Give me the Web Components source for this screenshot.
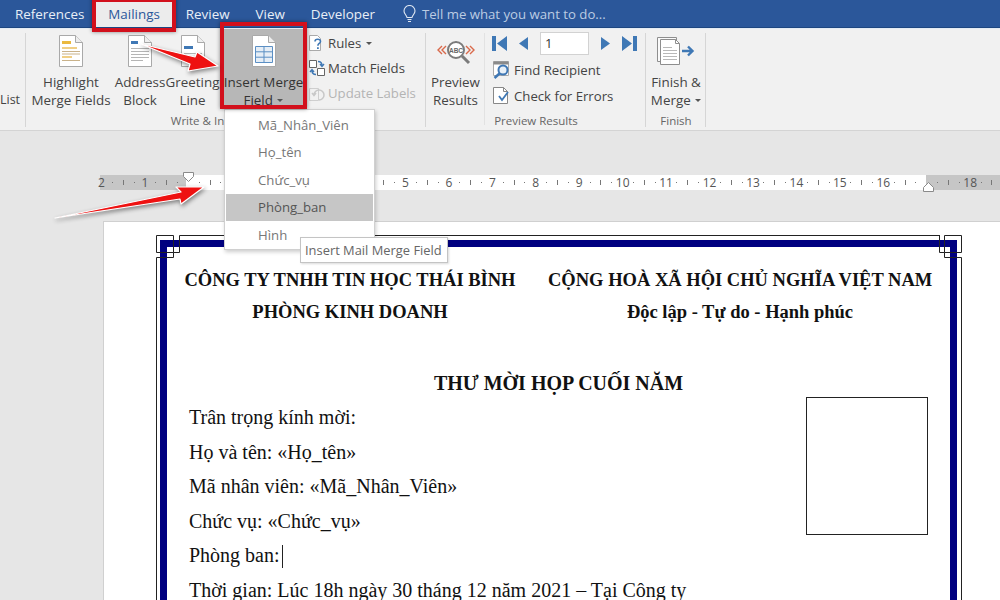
<!DOCTYPE html>
<html>
<head>
<meta charset="utf-8">
<title>Mailings</title>
<style>
  html, body { margin: 0; padding: 0; height: 100%; overflow: hidden; }
  body { font-family: "Open Sans", "Liberation Sans", sans-serif; background: #e6e6e6; }
  word-app { width: 1000px; height: 600px; }
</style>
</head>
<body>
<word-app>
  <tab-strip>
    <tab-item style="padding-right:11px">References</tab-item>
    <tab-item active>Mailings</tab-item>
    <tab-item>Review</tab-item>
    <tab-item>View</tab-item>
    <tab-item>Developer</tab-item>
    <tell-me>Tell me what you want to do...</tell-me>
  </tab-strip>

  <ribbon-bar>
    <ribbon-group width="26" label="">
      <big-btn width="20" style="font-size:12.5px"><span slot="icon"></span><br>List</big-btn>
    </ribbon-group>

    <!-- the menu hides the rest of this group's caption, the visible part is all that is drawn -->
    <ribbon-group width="400" label="Write &amp; In" label-inset="57">
      <big-btn width="90">
        <svg slot="icon" width="24" height="32" viewBox="0 0 24 32">
          <path d="M.5.5h16l7 7v24H.5z" fill="#fff" stroke="#a9a9a9"/><path d="M16.5.5v7h7" fill="#eee" stroke="#a9a9a9"/>
          <path d="M3 6h9v3H3z" fill="#eab93f"/><path d="M3 12h15v2H3zM3 21h10v2H3z" fill="#f0cf86"/><path d="M3 16.5h18M3 19h18M3 25.5h18" stroke="#c9b28a"/>
        </svg>
        Highlight<br>Merge Fields
      </big-btn>
      <big-btn width="48">
        <svg slot="icon" width="24" height="32" viewBox="0 0 24 32">
          <path d="M.5.5h16l7 7v24H.5z" fill="#fff" stroke="#a9a9a9"/><path d="M16.5.5v7h7" fill="#eee" stroke="#a9a9a9"/>
          <path d="M3 6h7v3H3z" fill="#3f78b5"/><path d="M3 13.5h18M3 16.5h18M3 19.5h18M3 22.5h18M3 25.5h12" stroke="#b5b5b5"/>
        </svg>
        Address<br>Block
      </big-btn>
      <big-btn width="57">
        <svg slot="icon" width="24" height="32" viewBox="0 0 24 32">
          <path d="M.5.5h16l7 7v24H.5z" fill="#fff" stroke="#a9a9a9"/><path d="M16.5.5v7h7" fill="#eee" stroke="#a9a9a9"/>
          <path d="M3 11h9v3H3z" fill="#3f78b5"/><path d="M3 18.5h18M3 21.5h18M3 24.5h18" stroke="#b5b5b5"/>
        </svg>
        Greeting<br>Line
      </big-btn>
      <big-btn width="85" active>
        <svg slot="icon" width="24" height="32" viewBox="0 0 24 32">
          <path d="M.5.5h16l7 7v24H.5z" fill="#fff" stroke="#a9a9a9"/><path d="M16.5.5v7h7" fill="#eee" stroke="#a9a9a9"/>
          <path d="M3.5 11.5h17v16h-17zM3.5 16.8h17M3.5 22.2h17M12 11.5v16" fill="#e6eef6" stroke="#5b8fc4"/>
        </svg>
        Insert Merge<br>Field <drop-caret></drop-caret>
      </big-btn>
      <btn-stack>
        <small-btn>
          <svg slot="icon" width="18" height="18" viewBox="0 0 18 18">
            <path d="M1.5 1.5h8l3 3v12h-11z" fill="#fff" stroke="#aaa"/><path d="M7 7.5c0-3 5.5-3 5.5 0 0 2-2.6 2-2.6 4.2" fill="none" stroke="#3f78b5" stroke-width="1.6"/><path d="M9 13.2h1.8V15H9z" fill="#3f78b5"/>
          </svg>
          Rules <drop-caret></drop-caret>
        </small-btn>
        <small-btn>
          <svg slot="icon" width="18" height="18" viewBox="0 0 18 18">
            <path d="M1.5 1.5h7v7h-7zM9.5 9.5h7v7h-7z" fill="#fff" stroke="#666"/><path d="M10 2.5c3 0 4 1.500 4 4M12 5l2 2.500L16 5" fill="none" stroke="#3f78b5" stroke-width="1.4"/><path d="M8 15.500c-3 0-4-1.500-4-4M2 13l2-2.500L6 13" fill="none" stroke="#3f78b5" stroke-width="1.4"/>
          </svg>
          Match Fields
        </small-btn>
        <small-btn disabled>
          <svg slot="icon" width="18" height="18" viewBox="0 0 18 18">
            <path d="M1.5 4.500h9v12h-9z" fill="none" stroke="#cfcfcf"/><path d="M6 11a5 5 0 1 1 5 5M4 9l2 2.500L8 9" fill="none" stroke="#c8c8c8" stroke-width="1.5"/>
          </svg>
          Update Labels
        </small-btn>
      </btn-stack>
    </ribbon-group>

    <ribbon-group width="220" label="Preview Results">
      <big-btn width="59" divided>
        <svg slot="icon" width="40" height="26" viewBox="0 0 40 26" style="margin-top:5px">
          <path d="M6 6l-4 4 4 4M10 6l-4 4 4 4M30 6l4 4-4 4M34 6l4 4-4 4" fill="none" stroke="#d9694a" stroke-width="1.4"/>
          <circle cx="20" cy="10" r="8" fill="#fff" stroke="#7b7b7b" stroke-width="2"/>
          <text x="20" y="12.500" font-size="6.500" font-weight="700" text-anchor="middle" fill="#666" font-family="Liberation Sans">ABC</text>
          <path d="M26 16l7 7" stroke="#7b7b7b" stroke-width="3"/>
        </svg>
        Preview<br>Results
      </big-btn>
      <nav-stack>
        <record-nav value="1"></record-nav>
        <small-btn tight>
          <svg slot="icon" width="19" height="19" viewBox="0 0 19 19">
            <path d="M1.500 1.500h15v14h-15z" fill="#fff" stroke="#aaa"/><path d="M1.500 1.500h15v3h-15z" fill="#8a8a8a"/>
            <circle cx="11" cy="10" r="4.500" fill="#e8f0f8" stroke="#3f78b5" stroke-width="2"/><path d="M7.500 13.500l-5 4.500" stroke="#3f78b5" stroke-width="2.500"/>
          </svg>
          Find Recipient
        </small-btn>
        <small-btn tight>
          <svg slot="icon" width="19" height="19" viewBox="0 0 19 19">
            <path d="M1.500 1.500h10l4 4v12h-14z" fill="#fff" stroke="#888"/><path d="M11.500 1.500v4h4" fill="none" stroke="#888"/>
            <path d="M7 10l3 4 6-8" fill="none" stroke="#3f78b5" stroke-width="1.800"/>
          </svg>
          Check for Errors
        </small-btn>
      </nav-stack>
    </ribbon-group>

    <ribbon-group width="60" label="Finish">
      <big-btn width="60">
        <svg slot="icon" width="38" height="28" viewBox="0 0 38 28" style="margin-top:2px">
          <path d="M.5.500h19v24H.5z" fill="#fafafa" stroke="#8e8e8e"/>
          <path d="M3.500 2.500h15l4 4v21h-19z" fill="#fff" stroke="#8e8e8e"/><path d="M18.500 2.500v4h4" fill="none" stroke="#8e8e8e"/>
          <path d="M6 10.500h9M6 13.500h14M6 16.500h14M6 19.500h14M6 22.500h14" stroke="#b8b8b8"/>
          <path d="M25 14h10M31 9.500l4.500 4.500-4.500 4.500" fill="none" stroke="#3f78b5" stroke-width="2.400"/>
        </svg>
        Finish &amp;<br>Merge <drop-caret></drop-caret>
      </big-btn>
    </ribbon-group>
  </ribbon-bar>

  <doc-canvas>
    <word-ruler></word-ruler>
    <doc-page>
      <doc-frame>
        <doc-heading>
          <span>CÔNG TY TNHH TIN HỌC THÁI BÌNH</span>
          <span>CỘNG HOÀ XÃ HỘI CHỦ NGHĨA VIỆT NAM</span>
          <span>PHÒNG KINH DOANH</span>
          <span>Độc lập - Tự do - Hạnh phúc</span>
        </doc-heading>
        <doc-title>THƯ MỜI HỌP CUỐI NĂM</doc-title>
        <doc-body>
          <div>Trân trọng kính mời:</div>
          <div>Họ và tên: «Họ_tên»</div>
          <div>Mã nhân viên: «Mã_Nhân_Viên»</div>
          <div>Chức vụ: «Chức_vụ»</div>
          <div>Phòng ban: <text-caret></text-caret></div>
          <div>Thời gian: Lúc 18h ngày 30 tháng 12 năm 2021 – Tại Công ty</div>
        </doc-body>
      </doc-frame>
    </doc-page>
  </doc-canvas>

  <merge-menu>
    <menu-row>Mã_Nhân_Viên</menu-row>
    <menu-row>Họ_tên</menu-row>
    <menu-row>Chức_vụ</menu-row>
    <menu-row hover>Phòng_ban</menu-row>
    <menu-row>Hình</menu-row>
  </merge-menu>
  <tool-tip>Insert Mail Merge Field</tool-tip>
  <red-marks></red-marks>
</word-app>

<script>
  class WordApp extends HTMLElement {
    constructor() {
      super();
      this.attachShadow({ mode: 'open' });
      this.shadowRoot.innerHTML = `
        <style>
          :host { display: flex; flex-direction: column; position: relative; overflow: hidden; color: #444; }
        </style>
        <slot></slot>`;
    }
  }

  class TabStrip extends HTMLElement {
    constructor() {
      super();
      this.attachShadow({ mode: 'open' });
      this.shadowRoot.innerHTML = `
        <style>
          :host { display: flex; height: 27px; padding-left: 2px; background: #2b579a; border-bottom: 1px solid #1d4680; flex: none; }
        </style>
        <slot></slot>`;
    }
  }

  class TabItem extends HTMLElement {
    constructor() {
      super();
      this.attachShadow({ mode: 'open' });
      this.shadowRoot.innerHTML = `
        <style>
          :host { display: flex; align-items: center; padding: 0 13px; font-size: 13.400px; color: #e9eff7; height: 27px; }
          :host([active]) { background: #ececec; color: #2b579a; }
        </style>
        <slot></slot>`;
    }
  }

  class TellMe extends HTMLElement {
    constructor() {
      super();
      this.attachShadow({ mode: 'open' });
      this.shadowRoot.innerHTML = `
        <style>
          :host { display: flex; align-items: center; gap: 6px; margin-left: 15px; font-size: 13.200px; color: #bccce3; height: 27px; }
        </style>
        <svg width="13" height="18" viewBox="0 0 13 18">
          <path d="M4 12.500C3.500 10 1 9 1 6a5.500 5.500 0 0 1 11 0c0 3-2.500 4-3 6.500z" fill="none" stroke="#dfe7f2" stroke-width="1.100"/>
          <path d="M4.500 14.500h4M5 16.500h3" stroke="#dfe7f2" stroke-width="1.100"/>
        </svg>
        <slot></slot>`;
    }
  }

  class RibbonBar extends HTMLElement {
    constructor() {
      super();
      this.attachShadow({ mode: 'open' });
      this.shadowRoot.innerHTML = `
        <style>
          :host { display: flex; flex: none; background: #f1f1f1; border-top: 1px solid #e4ebf3; border-bottom: 1px solid #d4d4d4; box-sizing: border-box; height: 103px; }
        </style>
        <slot></slot>`;
    }
  }

  class RibbonGroup extends HTMLElement {
    constructor() {
      super();
      this.attachShadow({ mode: 'open' });
      const inset = this.getAttribute('label-inset') || 0;
      this.shadowRoot.innerHTML = `
        <style>
          :host { display: flex; flex-direction: column; flex: none; box-sizing: border-box; width: ${this.getAttribute('width')}px; position: relative; }
          :host::after { content: ""; position: absolute; right: 0; top: 4px; bottom: 3px; width: 1px; background: #d6d6d6; }
          .items { display: flex; height: 83px; flex: none; }
          .label { text-align: center; font-size: 11.500px; line-height: 18px; color: #666; white-space: nowrap; padding-right: ${inset}px; }
        </style>
        <div class="items"><slot></slot></div>
        <div class="label">${this.getAttribute('label').replace('&', '&amp;')}</div>`;
    }
  }

  class BigBtn extends HTMLElement {
    constructor() {
      super();
      this.attachShadow({ mode: 'open' });
      this.shadowRoot.innerHTML = `
        <style>
          :host { display: flex; flex-direction: column; align-items: center; flex: none; box-sizing: border-box; width: ${this.getAttribute('width')}px; height: 80px; text-align: center; font-size: 13.400px; line-height: 18px; white-space: nowrap; color: #444; position: relative; }
          :host([active]) { background: #b7b7b7; color: #333; }
          :host([divided])::after { content: ""; position: absolute; right: 0; top: 4px; height: 92px; width: 1px; background: #e2e2e2; }
          .icon { height: 38px; padding-top: 6px; flex: none; }
        </style>
        <div class="icon"><slot name="icon"></slot></div>
        <div class="text"><slot></slot></div>`;
    }
  }

  class BtnStack extends HTMLElement {
    constructor() {
      super();
      this.attachShadow({ mode: 'open' });
      this.shadowRoot.innerHTML = `
        <style>
          :host { display: flex; flex-direction: column; padding: 1px 0 0 2px; }
        </style>
        <slot></slot>`;
    }
  }

  class NavStack extends HTMLElement {
    constructor() {
      super();
      this.attachShadow({ mode: 'open' });
      this.shadowRoot.innerHTML = `
        <style>
          :host { display: flex; flex-direction: column; padding: 2px 0 0 7px; gap: 1px; }
        </style>
        <slot></slot>`;
    }
  }

  class SmallBtn extends HTMLElement {
    constructor() {
      super();
      this.attachShadow({ mode: 'open' });
      this.shadowRoot.innerHTML = `
        <style>
          :host { display: flex; align-items: center; gap: 2px; height: 25px; font-size: 13.200px; white-space: nowrap; color: #444; }
          :host([tight]) { gap: 3px; }
          :host([disabled]) { color: #b4b4b4; }
          ::slotted(svg) { flex: none; }
        </style>
        <slot name="icon"></slot><span><slot></slot></span>`;
    }
  }

  class RecordNav extends HTMLElement {
    constructor() {
      super();
      this.attachShadow({ mode: 'open' });
      this.shadowRoot.innerHTML = `
        <style>
          :host { display: flex; align-items: center; height: 25px; color: #3f78b5; }
          .box { width: 49px; height: 23px; box-sizing: border-box; background: #fff; border: 1px solid #d2d2d2; font-size: 13px; color: #333; padding-left: 4px; line-height: 21px; margin: 0 11px 0 11px; }
          svg { display: block; }
        </style>
        <svg width="16" height="15" viewBox="0 0 16 15" style="margin-left:0"><path d="M0 0h4v15H0zM15 0v15L5 7.500z" fill="currentColor"/></svg>
        <svg width="11" height="15" viewBox="0 0 11 15" style="margin-left:10px"><path d="M10 1v13L1 7.500z" fill="currentColor"/></svg>
        <div class="box">${this.getAttribute('value')}</div>
        <svg width="11" height="15" viewBox="0 0 11 15"><path d="M1 1v13l9-6.500z" fill="currentColor"/></svg>
        <svg width="16" height="15" viewBox="0 0 16 15" style="margin-left:10px"><path d="M12 0h4v15h-4zM1 0v15l10-7.500z" fill="currentColor"/></svg>`;
    }
  }

  class DropCaret extends HTMLElement {
    constructor() {
      super();
      this.attachShadow({ mode: 'open' });
      this.shadowRoot.innerHTML = `
        <style>
          :host { display: inline-block; width: 0; height: 0; margin-left: 1px; vertical-align: 3px; border: 3px solid transparent; border-top-color: #555; border-bottom: 0; }
        </style>`;
    }
  }

  class DocCanvas extends HTMLElement {
    constructor() {
      super();
      this.attachShadow({ mode: 'open' });
      this.shadowRoot.innerHTML = `
        <style>
          :host { display: flex; flex-direction: column; flex: 1; min-height: 0; background: #e6e6e6; padding-top: 44px; overflow: hidden; }
        </style>
        <slot></slot>`;
    }
  }

  class WordRuler extends HTMLElement {
    constructor() {
      super();
      this.attachShadow({ mode: 'open' });
      const unit = 10.87;
      const hidden = [1, 2, 3, 4, 17];
      let cells = '';
      // cell 0 is the "2" to the left of the margin, one inch is four cells
      for (let i = 0; i < 84; i++) {
        const n = (i - 8) / 4;
        let mark = '';
        if (i % 4 === 0) {
          const num = Math.abs(n);
          mark = n === 0 || (n > 0 && hidden.includes(num)) ? '' : String(num);
        } else if (i % 4 === 2) {
          mark = '<b></b>';
        } else {
          mark = '<i></i>';
        }
        cells += `<span>${mark}</span>`;
      }
      this.shadowRoot.innerHTML = `
        <style>
          :host { display: flex; flex: none; height: 15px; margin-left: 96px; position: relative; font-size: 12px; color: #555;
            background: linear-gradient(to right, transparent 4px, #c6c6c6 4px, #c6c6c6 90px, #fff 90px, #fff 830px, #c6c6c6 830px); }
          span { flex: none; width: ${unit}px; height: 15px; display: flex; align-items: center; justify-content: center; white-space: nowrap; }
          b { width: 1px; height: 5px; background: #777; }
          i { width: 1px; height: 1px; background: #777; }
          svg { position: absolute; }
        </style>
        ${cells}
        <svg style="left:86px;top:-3px" width="13" height="11" viewBox="0 0 13 11"><path d="M1.500.5h10v4l-5 5-5-5z" fill="#fff" stroke="#8a8a8a"/></svg>
        <svg style="left:826px;top:7px" width="13" height="11" viewBox="0 0 13 11"><path d="M6.500.5l5 5v4h-10v-4z" fill="#fff" stroke="#8a8a8a"/></svg>`;
    }
  }

  class DocPage extends HTMLElement {
    constructor() {
      super();
      this.attachShadow({ mode: 'open' });
      this.shadowRoot.innerHTML = `
        <style>
          :host { display: block; flex: 1; margin: 31px 0 0 103px; padding: 18px 0 0 56px; background: #fff; border-top: 1px solid #d0d0d0; border-left: 1px solid #d0d0d0; box-sizing: border-box; position: relative; overflow: hidden; }
          svg { position: absolute; left: 0; top: 0; }
        </style>
        <slot></slot>
        <svg width="896" height="378" viewBox="104 222 896 378" fill="none" stroke="#222">
          <path d="M156.500 235.500h17v17h-17zM173.500 252.500h6v-17H940M156.500 600V257.500h17v-5"/>
          <path d="M961.500 235.500h-17v17h17zM944.500 252.500h-5v-17M961.500 600V257.500h-17v-5"/>
        </svg>`;
    }
  }

  class DocFrame extends HTMLElement {
    constructor() {
      super();
      this.attachShadow({ mode: 'open' });
      this.shadowRoot.innerHTML = `
        <style>
          :host { display: block; width: 783px; height: 400px; border: 7px solid #000080; font-family: "Liberation Serif", serif; color: #111; }
        </style>
        <slot></slot>`;
    }
  }

  class DocHeading extends HTMLElement {
    constructor() {
      super();
      this.attachShadow({ mode: 'open' });
      this.shadowRoot.innerHTML = `
        <style>
          :host { display: grid; grid-template-columns: 332px 384px; column-gap: 32px; padding: 17px 0 0 17px; font-size: 18.500px; font-weight: 700; line-height: 32px; text-align: center; white-space: nowrap; }
        </style>
        <slot></slot>`;
    }
  }

  class DocTitle extends HTMLElement {
    constructor() {
      super();
      this.attachShadow({ mode: 'open' });
      this.shadowRoot.innerHTML = `
        <style>
          :host { display: block; margin-top: 41px; font-size: 20px; font-weight: 700; line-height: 28px; text-align: center; }
        </style>
        <slot></slot>`;
    }
  }

  class DocBody extends HTMLElement {
    constructor() {
      super();
      this.attachShadow({ mode: 'open' });
      this.shadowRoot.innerHTML = `
        <style>
          :host { display: flex; justify-content: space-between; align-items: flex-start; padding: 0 22px; font-size: 20px; line-height: 34.600px; white-space: nowrap; }
          .lines { padding-top: 3px; }
          .photo { width: 122px; height: 138px; box-sizing: border-box; border: 1px solid #222; flex: none; }
        </style>
        <div class="lines"><slot></slot></div>
        <div class="photo"></div>`;
    }
  }

  class TextCaret extends HTMLElement {
    constructor() {
      super();
      this.attachShadow({ mode: 'open' });
      this.shadowRoot.innerHTML = `
        <style>
          :host { display: inline-block; width: 1px; height: 23px; background: #222; vertical-align: -6px; margin-left: -3px; }
        </style>`;
    }
  }

  class MergeMenu extends HTMLElement {
    constructor() {
      super();
      this.attachShadow({ mode: 'open' });
      this.shadowRoot.innerHTML = `
        <style>
          :host { display: block; position: absolute; left: 224px; top: 109px; width: 151px; height: 141px; box-sizing: border-box; padding: 1px 1px; background: #fff; border: 1px solid #d0d0d0; box-shadow: 1px 2px 4px rgba(0,0,0,.2); }
        </style>
        <slot></slot>`;
    }
  }

  class MenuRow extends HTMLElement {
    constructor() {
      super();
      this.attachShadow({ mode: 'open' });
      this.shadowRoot.innerHTML = `
        <style>
          :host { display: flex; align-items: center; height: 27.500px; padding-left: 32px; font-size: 13.200px; color: #777; white-space: nowrap; }
          :host([hover]) { background: #c6c6c6; color: #555; }
        </style>
        <slot></slot>`;
    }
  }

  class ToolTip extends HTMLElement {
    constructor() {
      super();
      this.attachShadow({ mode: 'open' });
      this.shadowRoot.innerHTML = `
        <style>
          :host { display: flex; align-items: center; position: absolute; left: 300px; top: 237px; width: 148px; height: 26px; box-sizing: border-box; padding-left: 4px; background: #fff; border: 1px solid #c4c4c4; box-shadow: 1px 1px 2px rgba(0,0,0,.15); font-size: 12.900px; color: #666; white-space: nowrap; }
        </style>
        <slot></slot>`;
    }
  }

  class RedMarks extends HTMLElement {
    constructor() {
      super();
      this.attachShadow({ mode: 'open' });
      this.shadowRoot.innerHTML = `
        <style>
          :host { display: block; position: absolute; inset: 0; pointer-events: none; }
          .box { position: absolute; box-sizing: border-box; border: 4px solid #d2101c; box-shadow: 0 0 4px rgba(0,0,0,.45); }
          svg { position: absolute; left: 0; top: 0; filter: drop-shadow(1px 2px 2px rgba(0,0,0,.45)); }
        </style>
        <div class="box" style="left:92px;top:-2px;width:84px;height:34px"></div>
        <div class="box" style="left:220px;top:22px;width:87px;height:87px"></div>
        <svg width="1000" height="600" fill="#ee1111" stroke="#fff" stroke-width="1.200" stroke-linejoin="round">
          <path d="M141 44L195 57L197 52L218 66L188 71L190 64z"/>
          <path d="M55 218L181 192L176 187L204 187L181 204L180 199z"/>
        </svg>`;
    }
  }

  customElements.define('word-app', WordApp);
  customElements.define('tab-strip', TabStrip);
  customElements.define('tab-item', TabItem);
  customElements.define('tell-me', TellMe);
  customElements.define('ribbon-bar', RibbonBar);
  customElements.define('ribbon-group', RibbonGroup);
  customElements.define('big-btn', BigBtn);
  customElements.define('btn-stack', BtnStack);
  customElements.define('nav-stack', NavStack);
  customElements.define('small-btn', SmallBtn);
  customElements.define('record-nav', RecordNav);
  customElements.define('drop-caret', DropCaret);
  customElements.define('doc-canvas', DocCanvas);
  customElements.define('word-ruler', WordRuler);
  customElements.define('doc-page', DocPage);
  customElements.define('doc-frame', DocFrame);
  customElements.define('doc-heading', DocHeading);
  customElements.define('doc-title', DocTitle);
  customElements.define('doc-body', DocBody);
  customElements.define('text-caret', TextCaret);
  customElements.define('merge-menu', MergeMenu);
  customElements.define('menu-row', MenuRow);
  customElements.define('tool-tip', ToolTip);
  customElements.define('red-marks', RedMarks);
</script>
</body>
</html>
